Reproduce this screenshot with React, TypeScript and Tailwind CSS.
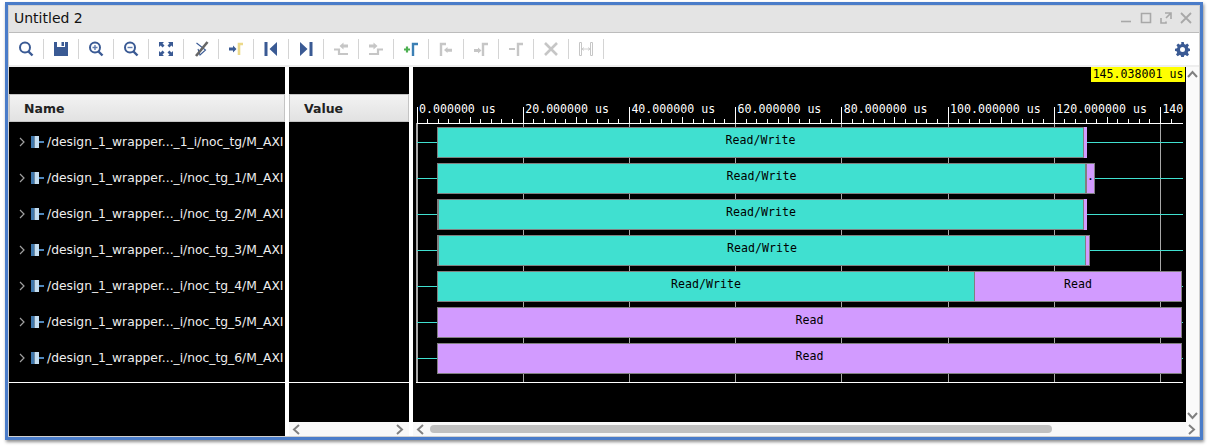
const NAVY = "#3a5a94"
const GRAY = "#c6c6c6"

function Svg({ children }: { children: React.ReactNode }) {
  return (
    <svg width="16" height="16" viewBox="0 0 16 16" fill="none">
      {children}
    </svg>
  )
}

const toolbarIcons: React.ReactNode[] = [
  <Svg key="search">
    <circle cx="7" cy="6.5" r="5" stroke={NAVY} strokeWidth="2" />
    <path d="M10.5 10.5 14.5 14.5" stroke={NAVY} strokeWidth="2.4" />
  </Svg>,
  <Svg key="save">
    <path d="M1 1h14v14H1z" fill={NAVY} />
    <path d="M4 1h8v5H4z" fill="#fff" />
    <path d="M8.5 1H11v4H8.5z" fill={NAVY} />
  </Svg>,
  <Svg key="zoom-in">
    <circle cx="7" cy="6.5" r="5" stroke={NAVY} strokeWidth="2" />
    <path d="M7 4v5M4.5 6.5h5" stroke="#5f7cb0" strokeWidth="1.4" />
    <path d="M10.5 10.5 14.5 14.5" stroke={NAVY} strokeWidth="2.4" />
  </Svg>,
  <Svg key="zoom-out">
    <circle cx="7" cy="6.5" r="5" stroke={NAVY} strokeWidth="2" />
    <path d="M4.5 6.5h5" stroke="#5f7cb0" strokeWidth="1.4" />
    <path d="M10.5 10.5 14.5 14.5" stroke={NAVY} strokeWidth="2.4" />
  </Svg>,
  <Svg key="fit">
    <path d="M1 1h5L4.500 2.600 6.500 4.600 4.600 6.500 2.600 4.500 1 6zM15 1v5l-1.600-1.500-2 2-1.900-1.900 2-2L10 1zM1 15v-5l1.600 1.500 2-2 1.900 1.900-2 2L6 15zM15 15h-5l1.500-1.600-2-2 1.900-1.900 2 2L15 10z" fill={NAVY} />
  </Svg>,
  <Svg key="snap">
    <path d="M3.500 2 12.500 9 7 14 5 8" stroke={NAVY} strokeWidth="1.100" />
    <path d="M14.500 1 3 15" stroke="#666" strokeWidth="2.600" />
  </Svg>,
  <Svg key="goto-cursor">
    <path d="M11 14V3h4" stroke="#ecd98a" strokeWidth="2.600" />
    <path d="M1 6.500h4V4.500L8.500 8 5 11.500v-2H1z" fill={NAVY} />
  </Svg>,
  <Svg key="first">
    <path d="M1.500 1h3v14h-3zM14 1v14L6.500 8z" fill={NAVY} />
  </Svg>,
  <Svg key="last">
    <path d="M2 1v14L9.500 8zM11.500 1h3v14h-3z" fill={NAVY} />
  </Svg>,
  <Svg key="prev-marker">
    <path d="M1 8.500h5V13h9" stroke={GRAY} strokeWidth="2.200" />
    <path d="M6.500 5 10.500 1.500V3.500H15V6.500H10.500V8.500z" fill={GRAY} />
  </Svg>,
  <Svg key="next-marker">
    <path d="M1 13h9V8.500h5" stroke={GRAY} strokeWidth="2.200" />
    <path d="M9.500 5 5.500 1.500V3.500H1V6.500H5.500V8.500z" fill={GRAY} />
  </Svg>,
  <Svg key="add-marker">
    <path d="M1 8.500h6M4 5.500v6" stroke="#4caf50" strokeWidth="2.200" />
    <path d="M10 15V3h5" stroke="#3b7fb4" strokeWidth="2.400" />
  </Svg>,
  <Svg key="prev-edge">
    <path d="M3 15V3h5" stroke={GRAY} strokeWidth="2.400" />
    <path d="M6 9 9.500 6V7.800H14v3H9.500V12z" fill={GRAY} />
  </Svg>,
  <Svg key="next-edge">
    <path d="M10 15V3h5" stroke={GRAY} strokeWidth="2.400" />
    <path d="M8.500 9.500 5 6.500V8H1v3H5v1.500z" fill={GRAY} />
  </Svg>,
  <Svg key="remove-marker">
    <path d="M1 8h6" stroke={GRAY} strokeWidth="2" />
    <path d="M10 15V3h5" stroke={GRAY} strokeWidth="2.400" />
  </Svg>,
  <Svg key="remove-all">
    <path d="M2 2 14 14M14 2 2 14" stroke={GRAY} strokeWidth="2.600" />
  </Svg>,
  <Svg key="span">
    <path d="M1.500 1.500h2v13h-2zM12.500 1.500h2v13h-2z" stroke={GRAY} strokeWidth="1" />
    <path d="M4 8h8M4 8l2-1.500M4 8l2 1.500M12 8l-2-1.500M12 8l-2 1.500" stroke={GRAY} strokeWidth="0.800" />
  </Svg>,
]

function Chevron({ dir, className }: { dir: "left" | "right" | "up" | "down"; className?: string }) {
  const d = {
    left: "M7 1 2 5.500 7 10",
    right: "M2 1 7 5.500 2 10",
    up: "M1 7 5.500 2 10 7",
    down: "M1 2 5.500 7 10 2",
  }[dir]
  return (
    <svg width="11" height="11" viewBox="0 0 11 11" fill="none" className={className}>
      <path d={d} stroke="#808080" strokeWidth="2" />
    </svg>
  )
}

const signals = [
  "/design_1_wrapper..._1_i/noc_tg/M_AXI",
  "/design_1_wrapper..._i/noc_tg_1/M_AXI",
  "/design_1_wrapper..._i/noc_tg_2/M_AXI",
  "/design_1_wrapper..._i/noc_tg_3/M_AXI",
  "/design_1_wrapper..._i/noc_tg_4/M_AXI",
  "/design_1_wrapper..._i/noc_tg_5/M_AXI",
  "/design_1_wrapper..._i/noc_tg_6/M_AXI",
]

type Segment = { className: string; label?: string }

const TEAL = "bg-[#40e0d0] border border-[#808080]"
const PURPLE = "bg-[#d29bff] border border-[#808080]"

const rows: Segment[][] = [
  [{ className: `w-[647px] ${TEAL}`, label: "Read/Write" }, { className: "w-[3px] bg-[#d29bff]" }],
  [
    { className: `w-[649px] ${TEAL}`, label: "Read/Write" },
    { className: `w-[9px] ${PURPLE}`, label: "." },
  ],
  [{ className: `w-[647px] ${TEAL} border-l-2`, label: "Read/Write" }, { className: "w-[3px] bg-[#d29bff]" }],
  [
    { className: `w-[649px] ${TEAL} border-l-2`, label: "Read/Write" },
    { className: "w-[4px] bg-[#d29bff] border-y border-r border-[#808080]" },
  ],
  [
    { className: `w-[537px] ${TEAL} border-r-0`, label: "Read/Write" },
    { className: `w-[208px] ${PURPLE}`, label: "Read" },
  ],
  [{ className: `w-[745px] ${PURPLE}`, label: "Read" }],
  [{ className: `w-[745px] ${PURPLE}`, label: "Read" }],
]

// wave canvas starts at x=413, 20us is 106.2px
const majors = [0, 1, 2, 3, 4, 5, 6, 7].map((i) => ({
  x: 3.5 + i * 106.2,
  label: i === 7 ? "140" : `${i * 20}.000000 us`,
}))
const ticks = Array.from({ length: 72 }, (_, i) => i)

function Header({ label, className }: { label: string; className: string }) {
  return (
    <div
      className={`flex h-[28px] items-center border border-[#c4c4c4] bg-gradient-to-b from-[#f2f2f2] to-[#e2e2e2] pt-[2px] text-[12.500px] font-bold text-[#222] ${className}`}
    >
      {label}
    </div>
  )
}

function Wave() {
  return (
    <div className="relative h-full flex-1 overflow-hidden bg-black font-['DejaVu_Sans_Mono',monospace] text-[11.600px]">
      {majors.map((m) => (
        <div key={m.x} className="absolute top-[56px] h-[259px] w-px bg-[#a8a8a8]" style={{ left: m.x }} />
      ))}
      <div className="absolute top-[33px] left-[3px] h-[24px] w-[767px] overflow-hidden border-b border-white">
        {majors.map((m) => (
          <div key={m.x} className="absolute top-[7px] h-[16px] w-px bg-white" style={{ left: m.x - 3 }} />
        ))}
        {ticks.map((i) => (
          <div
            key={i}
            className={`absolute bottom-0 w-px bg-white ${i % 5 === 0 ? "h-[6px]" : "h-[4px]"}`}
            style={{ left: 0.5 + i * 10.62 }}
          />
        ))}
        {majors.map((m) => (
          <span key={m.x} className="absolute top-[1px] whitespace-nowrap text-white" style={{ left: m.x - 0.5 }}>
            {m.label}
          </span>
        ))}
      </div>

      <div className="absolute top-0 right-[1px] flex h-[15px] w-[94px] items-center justify-center bg-[#ffff00] text-black">
        145.038001 us
      </div>

      <div className="pt-[57px]">
        {rows.map((segments, i) => (
          <div key={i} className="relative h-[36px] pt-[3px] pl-[24px]">
            <div className="absolute top-[18px] left-[4px] h-px w-[766px] bg-[#40e0d0]" />
            <div className="relative flex h-[31px]">
              {segments.map((s, j) => (
                <div key={j} className={`flex shrink-0 items-center justify-center pb-[3px] leading-none text-black ${s.className}`}>
                  {s.label}
                </div>
              ))}
            </div>
          </div>
        ))}
      </div>
      <div className="absolute top-[315px] left-[3px] h-px w-[767px] bg-white" />
      <div className="absolute top-[56px] left-[3px] h-[259px] w-px bg-[#a8a8a8]" />

      <div className="absolute bottom-0 left-0 flex h-[14px] w-full items-center bg-[#f8f8f8]">
        <Chevron dir="left" className="ml-[3px]" />
        <div className="ml-[3px] h-[8px] w-[622px] rounded-full bg-[#c0c0c0]" />
      </div>
    </div>
  )
}

export default function App() {
  return (
    <div className="h-[448px] w-[1208px] overflow-hidden bg-white pt-[2px] pl-[5px] font-['DejaVu_Sans',sans-serif]">
      <div className="h-[438px] w-[1198px] border-[3px] border-[#4a7cc9] shadow-[1px_2px_3px_rgba(0,0,0,0.45)]">
        <div className="flex h-full w-full flex-col border border-[#d0d0d0]">
          <div className="flex h-[27px] shrink-0 items-center justify-between border-b border-[#bcbcbc] bg-[#e4e4e4] pr-[7px] pb-[2px] pl-[5px]">
            <span className="text-[14px] text-[#111]">Untitled 2</span>
            <div className="flex items-center gap-[8px]">
              <svg width="12" height="12" viewBox="0 0 12 12" fill="none"><path d="M1 9.500h10" stroke="#a8a8a8" strokeWidth="1.600" /></svg>
              <svg width="12" height="12" viewBox="0 0 12 12" fill="none"><path d="M1.500 1.500h9v9h-9z" stroke="#a8a8a8" strokeWidth="1.600" /></svg>
              <svg width="12" height="12" viewBox="0 0 12 12" fill="none"><path d="M5 1h6v6M11 1 6 6M1 6v5h5v-1.500" stroke="#a8a8a8" strokeWidth="1.600" /></svg>
              <svg width="12" height="12" viewBox="0 0 12 12" fill="none"><path d="M1 1 11 11M11 1 1 11" stroke="#a8a8a8" strokeWidth="1.800" /></svg>
            </div>
          </div>

          <div className="flex h-[34px] shrink-0 items-start justify-between border-b-2 border-[#eeeeee] bg-white pr-[9px]">
            <div className="flex h-[32px] items-center">
              {toolbarIcons.map((icon, i) => (
                <div key={i} className="flex h-[20px] w-[35px] items-center justify-center border-r border-[#d4d4d4]">
                  {icon}
                </div>
              ))}
            </div>
            <div className="flex h-[32px] items-center">
              <svg width="15" height="15" viewBox="0 0 24 24" fill={NAVY}>
                <path fillRule="evenodd" d="M10 0h4l.6 3.300 2.200.9L19.600 2.300l2.800 2.800-1.900 2.800.9 2.200L24 10.700v3.600l-2.600.6-.9 2.200 1.900 2.800-2.800 2.800-2.800-1.900-2.200.9-.6 3.300h-4l-.6-3.300-2.200-.9-2.800 1.900-2.800-2.800 1.900-2.800-.9-2.200L0 14.300v-3.600l3.300-.6.9-2.200L2.300 5.100l2.800-2.800 2.800 1.900 2.200-.9zM12 8a4 4 0 1 0 0 8 4 4 0 0 0 0-8z" />
              </svg>
            </div>
          </div>

          <div className="flex min-h-0 flex-1 bg-white">
            <div className="relative h-full w-[276px] bg-black">
              <div className="h-[27px]" />
              <Header label="Name" className="pl-[14px]" />
              <div className="pt-[2px]">
                {signals.map((s) => (
                  <div key={s} className="flex h-[36px] items-center whitespace-nowrap text-[12.300px] text-[#eeeeee]">
                    <svg width="6" height="10" viewBox="0 0 6 10" fill="none" className="ml-[10px]">
                      <path d="M1 1 5 5 1 9" stroke="#a0a0a0" strokeWidth="1.200" />
                    </svg>
                    <svg width="13" height="12" viewBox="0 0 13 12" className="ml-[6px]">
                      <path d="M0 0h3.500v12H0z" fill="#3f77ac" />
                      <path d="M3.500 0H8v12H3.500z" fill="#c4def2" />
                      <path d="M8 5h5v2H8z" fill="#4f87bc" />
                    </svg>
                    <span className="ml-[3px]">{s}</span>
                  </div>
                ))}
              </div>
              <div className="mt-[6px] h-px w-full bg-white" />
            </div>
            <div className="w-[4px]" />
            <div className="flex h-full w-[120px] flex-col bg-black">
              <div className="h-[27px]" />
              <Header label="Value" className="pl-[14px]" />
              <div className="mt-[260px] h-px bg-white" />
              <div className="mt-auto flex h-[14px] items-center justify-between bg-[#f8f8f8] px-[3px]">
                <Chevron dir="left" />
                <Chevron dir="right" />
              </div>
            </div>
            <div className="w-[4px]" />
            <Wave />
            <div className="flex h-full w-[13px] flex-col items-center justify-between bg-[#fafafa] pt-[3px] pb-[1px]">
              <Chevron dir="up" />
              <div className="flex flex-col items-center gap-[2px]">
                <Chevron dir="down" />
                <Chevron dir="right" />
              </div>
            </div>
          </div>
        </div>
      </div>
    </div>
  )
}
